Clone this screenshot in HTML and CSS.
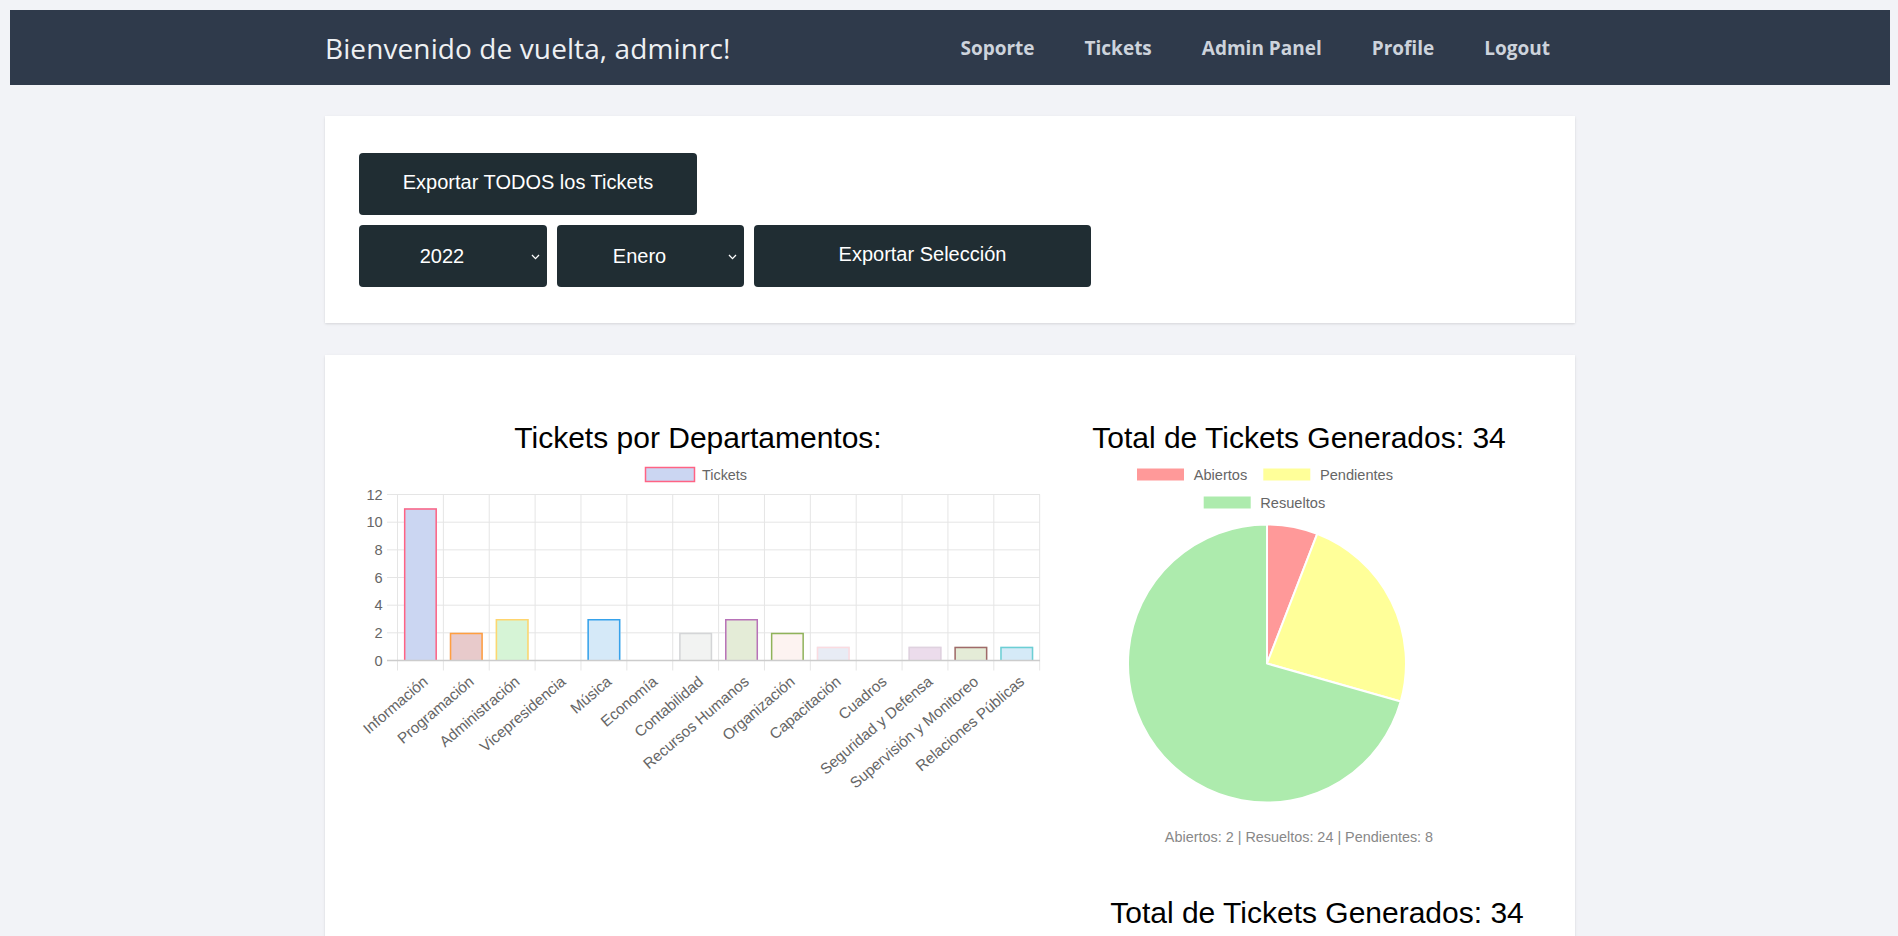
FILE: index.html
```html
<!DOCTYPE html>
<html lang="es">
<head>
<meta charset="utf-8">
<title>Panel</title>
<link rel="stylesheet" href="styles.css">
</head>
<body>
<nav class="topbar">
  <div class="topbar-inner">
    <div class="welcome">Bienvenido de vuelta, adminrc!</div>
    <ul class="nav-links">
      <li><a href="#">Soporte</a></li>
      <li><a href="#">Tickets</a></li>
      <li><a href="#">Admin Panel</a></li>
      <li><a href="#">Profile</a></li>
      <li><a href="#">Logout</a></li>
    </ul>
  </div>
</nav>

<main class="container">
  <section class="card export-card">
    <button class="btn btn-all">Exportar TODOS los Tickets</button>
    <div class="export-row">
      <div class="select-wrap">
        <select class="select">
          <option>2022</option>
          <option>2023</option>
          <option>2024</option>
        </select>
        <svg class="chevron" width="9" height="6" viewBox="0 0 9 6"><path d="M1 1 L4.5 4.6 L8 1" fill="none" stroke="#ffffff" stroke-width="1.3"/></svg>
      </div>
      <div class="select-wrap">
        <select class="select">
          <option>Enero</option>
          <option>Febrero</option>
          <option>Marzo</option>
        </select>
        <svg class="chevron" width="9" height="6" viewBox="0 0 9 6"><path d="M1 1 L4.5 4.6 L8 1" fill="none" stroke="#ffffff" stroke-width="1.3"/></svg>
      </div>
      <button class="btn btn-sel">Exportar Selección</button>
    </div>
  </section>

  <section class="card charts-card">
    <div class="chart-col chart-left">
      <h2 class="chart-title">Tickets por Departamentos:</h2>
      <svg class="bar-chart" width="706" height="340" viewBox="0 0 706 340">
        <g font-family="Liberation Sans, Arial, sans-serif" font-size="14.4" fill="#666">
          <rect x="300.5" y="11.5" width="49" height="14" fill="#cbd6f2" stroke="#ff6384" stroke-width="1.5"/>
          <text x="357" y="23.5">Tickets</text>
        </g>
        <g stroke="#e5e5e5" stroke-width="1">
          <line x1="42" y1="38.54" x2="695" y2="38.54"/>
          <line x1="42" y1="66.2" x2="695" y2="66.2"/>
          <line x1="42" y1="93.86" x2="695" y2="93.86"/>
          <line x1="42" y1="121.52" x2="695" y2="121.52"/>
          <line x1="42" y1="149.18" x2="695" y2="149.18"/>
          <line x1="42" y1="176.84" x2="695" y2="176.84"/>
          <line x1="52.5" y1="38.5" x2="52.5" y2="214.5"/>
          <line x1="98.37" y1="38.5" x2="98.37" y2="214.5"/>
          <line x1="144.24" y1="38.5" x2="144.24" y2="214.5"/>
          <line x1="190.11" y1="38.5" x2="190.11" y2="214.5"/>
          <line x1="235.98" y1="38.5" x2="235.98" y2="214.5"/>
          <line x1="281.85" y1="38.5" x2="281.85" y2="214.5"/>
          <line x1="327.72" y1="38.5" x2="327.72" y2="214.5"/>
          <line x1="373.59" y1="38.5" x2="373.59" y2="214.5"/>
          <line x1="419.46" y1="38.5" x2="419.46" y2="214.5"/>
          <line x1="465.33" y1="38.5" x2="465.33" y2="214.5"/>
          <line x1="511.2" y1="38.5" x2="511.2" y2="214.5"/>
          <line x1="557.07" y1="38.5" x2="557.07" y2="214.5"/>
          <line x1="602.94" y1="38.5" x2="602.94" y2="214.5"/>
          <line x1="648.81" y1="38.5" x2="648.81" y2="214.5"/>
          <line x1="694.68" y1="38.5" x2="694.68" y2="214.5"/>
        </g>
        <g font-family="Liberation Sans, Arial, sans-serif" font-size="14.6" fill="#666" text-anchor="end">
          <text x="37.7" y="43.6">12</text>
          <text x="37.7" y="71.3">10</text>
          <text x="37.7" y="99">8</text>
          <text x="37.7" y="126.6">6</text>
          <text x="37.7" y="154.3">4</text>
          <text x="37.7" y="181.9">2</text>
          <text x="37.7" y="209.6">0</text>
        </g>
        <g>
          <rect x="58.94" y="52.37" width="33" height="152.13" fill="#cbd6f2"/>
          <path d="M59.69 204.5 V53.12 H91.19 V204.5" fill="none" stroke="#ff6384" stroke-width="1.5"/>
          <rect x="104.81" y="176.84" width="33" height="27.66" fill="#e8cacb"/>
          <path d="M105.56 204.5 V177.59 H137.06 V204.5" fill="none" stroke="#ff9f40" stroke-width="1.5"/>
          <rect x="150.68" y="163.01" width="33" height="41.49" fill="#d6f4d6"/>
          <path d="M151.43 204.5 V163.76 H182.93 V204.5" fill="none" stroke="#ffd56e" stroke-width="1.5"/>
          <rect x="242.42" y="163.01" width="33" height="41.49" fill="#d5e9f8"/>
          <path d="M243.17 204.5 V163.76 H274.67 V204.5" fill="none" stroke="#36a2eb" stroke-width="1.5"/>
          <rect x="334.16" y="176.84" width="33" height="27.66" fill="#f2f3f2"/>
          <path d="M334.91 204.5 V177.59 H366.41 V204.5" fill="none" stroke="#d4d5d7" stroke-width="1.5"/>
          <rect x="380.03" y="163.01" width="33" height="41.49" fill="#e4ecd7"/>
          <path d="M380.78 204.5 V163.76 H412.28 V204.5" fill="none" stroke="#b872b8" stroke-width="1.5"/>
          <rect x="425.9" y="176.84" width="33" height="27.66" fill="#fdf3f1"/>
          <path d="M426.65 204.5 V177.59 H458.15 V204.5" fill="none" stroke="#8fb35a" stroke-width="1.5"/>
          <rect x="471.77" y="190.67" width="33" height="13.83" fill="#e8ecf5"/>
          <path d="M472.52 204.5 V191.42 H504.02 V204.5" fill="none" stroke="#fbdbe0" stroke-width="1.5"/>
          <rect x="563.51" y="190.67" width="33" height="13.83" fill="#ecdcec"/>
          <path d="M564.26 204.5 V191.42 H595.76 V204.5" fill="none" stroke="#dfd2df" stroke-width="1.5"/>
          <rect x="609.38" y="190.67" width="33" height="13.83" fill="#e4ecd7"/>
          <path d="M610.13 204.5 V191.42 H641.63 V204.5" fill="none" stroke="#a06a6a" stroke-width="1.5"/>
          <rect x="655.25" y="190.67" width="33" height="13.83" fill="#d5eaf7"/>
          <path d="M656 204.5 V191.42 H687.5 V204.5" fill="none" stroke="#6ccfd4" stroke-width="1.5"/>
        </g>
        <line x1="42" y1="204.5" x2="695" y2="204.5" stroke="#cccccc" stroke-width="1.5"/>
        <g font-family="Liberation Sans, Arial, sans-serif" font-size="15.2" fill="#666" text-anchor="end" dominant-baseline="central">
          <text transform="translate(80.4 223) rotate(-40.5)">Información</text>
          <text transform="translate(126.3 223) rotate(-40.5)">Programación</text>
          <text transform="translate(172.2 223) rotate(-40.5)">Administración</text>
          <text transform="translate(218 223) rotate(-40.5)">Vicepresidencia</text>
          <text transform="translate(263.9 223) rotate(-40.5)">Música</text>
          <text transform="translate(309.8 223) rotate(-40.5)">Economía</text>
          <text transform="translate(355.7 223) rotate(-40.5)">Contabilidad</text>
          <text transform="translate(401.5 223) rotate(-40.5)">Recursos Humanos</text>
          <text transform="translate(447.4 223) rotate(-40.5)">Organización</text>
          <text transform="translate(493.3 223) rotate(-40.5)">Capacitación</text>
          <text transform="translate(539.1 223) rotate(-40.5)">Cuadros</text>
          <text transform="translate(585 223) rotate(-40.5)">Seguridad y Defensa</text>
          <text transform="translate(630.9 223) rotate(-40.5)">Supervisión y Monitoreo</text>
          <text transform="translate(676.8 223) rotate(-40.5)">Relaciones Públicas</text>
        </g>
      </svg>
    </div>

    <div class="chart-col chart-right">
      <h2 class="chart-title">Total de Tickets Generados: 34</h2>
      <svg class="pie-chart" width="412" height="350" viewBox="0 0 412 350">
        <g font-family="Liberation Sans, Arial, sans-serif" font-size="14.6" fill="#666">
          <rect x="76" y="12.5" width="47" height="12" fill="#ff9999"/>
          <text x="132.7" y="23.6">Abiertos</text>
          <rect x="202.3" y="12.5" width="47" height="12" fill="#ffff99"/>
          <text x="259" y="23.6">Pendientes</text>
          <rect x="142.7" y="40.5" width="47" height="12" fill="#adebad"/>
          <text x="199.3" y="51.6">Resueltos</text>
        </g>
        <g stroke="#ffffff" stroke-width="2" stroke-linejoin="round">
          <path d="M206 207.5 L206 68.5 A139 139 0 0 1 256.2 77.9 Z" fill="#ff9999"/>
          <path d="M206 207.5 L256.2 77.9 A139 139 0 0 1 339.7 245.5 Z" fill="#ffff99"/>
          <path d="M206 207.5 L339.7 245.5 A139 139 0 1 1 206 68.5 Z" fill="#adebad"/>
        </g>
      </svg>
      <p class="summary">Abiertos: 2 | Resueltos: 24 | Pendientes: 8</p>
      <h2 class="chart-title second-title">Total de Tickets Generados: 34</h2>
    </div>
  </section>
</main>
</body>
</html>
```

FILE: styles.css
```css
* {
  box-sizing: border-box;
}

body {
  margin: 10px 8px 0 10px;
  background: #f2f3f7;
  font-family: "Liberation Sans", Arial, sans-serif;
}

.topbar {
  background: #2f3a4b;
  height: 75px;
}

.topbar-inner {
  width: 1250px;
  height: 100%;
  margin: 0 auto;
  display: flex;
  align-items: center;
  justify-content: space-between;
}

.welcome {
  font-family: "Open Sans", "Noto Sans", sans-serif;
  font-size: 28px;
  font-weight: 400;
  color: #eef0f3;
  letter-spacing: 0.1px;
}

.nav-links {
  list-style: none;
  margin: 0;
  padding: 0;
  display: flex;
}

.nav-links a {
  display: block;
  padding: 0 25px;
  font-family: "Open Sans", "Noto Sans", sans-serif;
  font-size: 19px;
  font-weight: 700;
  color: #cdd3dc;
  text-decoration: none;
}

.container {
  width: 1250px;
  margin: 31px auto 0;
}

.card {
  background: #ffffff;
  box-shadow: 0 1px 3px rgba(0, 0, 0, 0.08), 0 1px 2px rgba(0, 0, 0, 0.05);
}

.export-card {
  padding: 37px 34px 36px;
  display: flex;
  flex-direction: column;
  align-items: flex-start;
  gap: 10px;
}

.btn {
  height: 62px;
  border: none;
  border-radius: 4px;
  background: #202d33;
  color: #ffffff;
  font-family: "Liberation Sans", Arial, sans-serif;
  font-size: 20px;
  cursor: pointer;
  padding: 0 0 3px;
}

.btn-all {
  width: 338px;
}

.export-row {
  display: flex;
  gap: 10px;
}

.select-wrap {
  position: relative;
}

.select {
  appearance: none;
  -webkit-appearance: none;
  width: 188px;
  height: 62px;
  border: none;
  border-radius: 4px;
  background: #202d33;
  color: #ffffff;
  font-family: "Liberation Sans", Arial, sans-serif;
  font-size: 20px;
  text-align: center;
  text-align-last: center;
  padding: 0 28px 0 6px;
}

.select-wrap + .select-wrap .select {
  width: 187px;
}

.chevron {
  position: absolute;
  right: 7px;
  top: 29px;
  pointer-events: none;
}

.btn-sel {
  width: 337px;
}

.charts-card {
  margin-top: 32px;
  padding: 65px 20px 60px;
  display: flex;
  gap: 10px;
  align-items: flex-start;
}

.chart-col {
  display: flex;
  flex-direction: column;
}

.chart-left {
  width: 706px;
}

.chart-right {
  width: 476px;
}

.chart-title {
  margin: 0;
  font-family: "Liberation Sans", Arial, sans-serif;
  font-size: 30px;
  font-weight: 400;
  line-height: 36px;
  color: #000000;
  text-align: center;
}

.bar-chart,
.pie-chart {
  display: block;
}

.summary {
  margin: 23px 0 0;
  font-size: 14.4px;
  line-height: 17px;
  color: #888888;
  text-align: center;
}

.second-title {
  margin-top: 49px;
  padding-left: 36px;
}
```
